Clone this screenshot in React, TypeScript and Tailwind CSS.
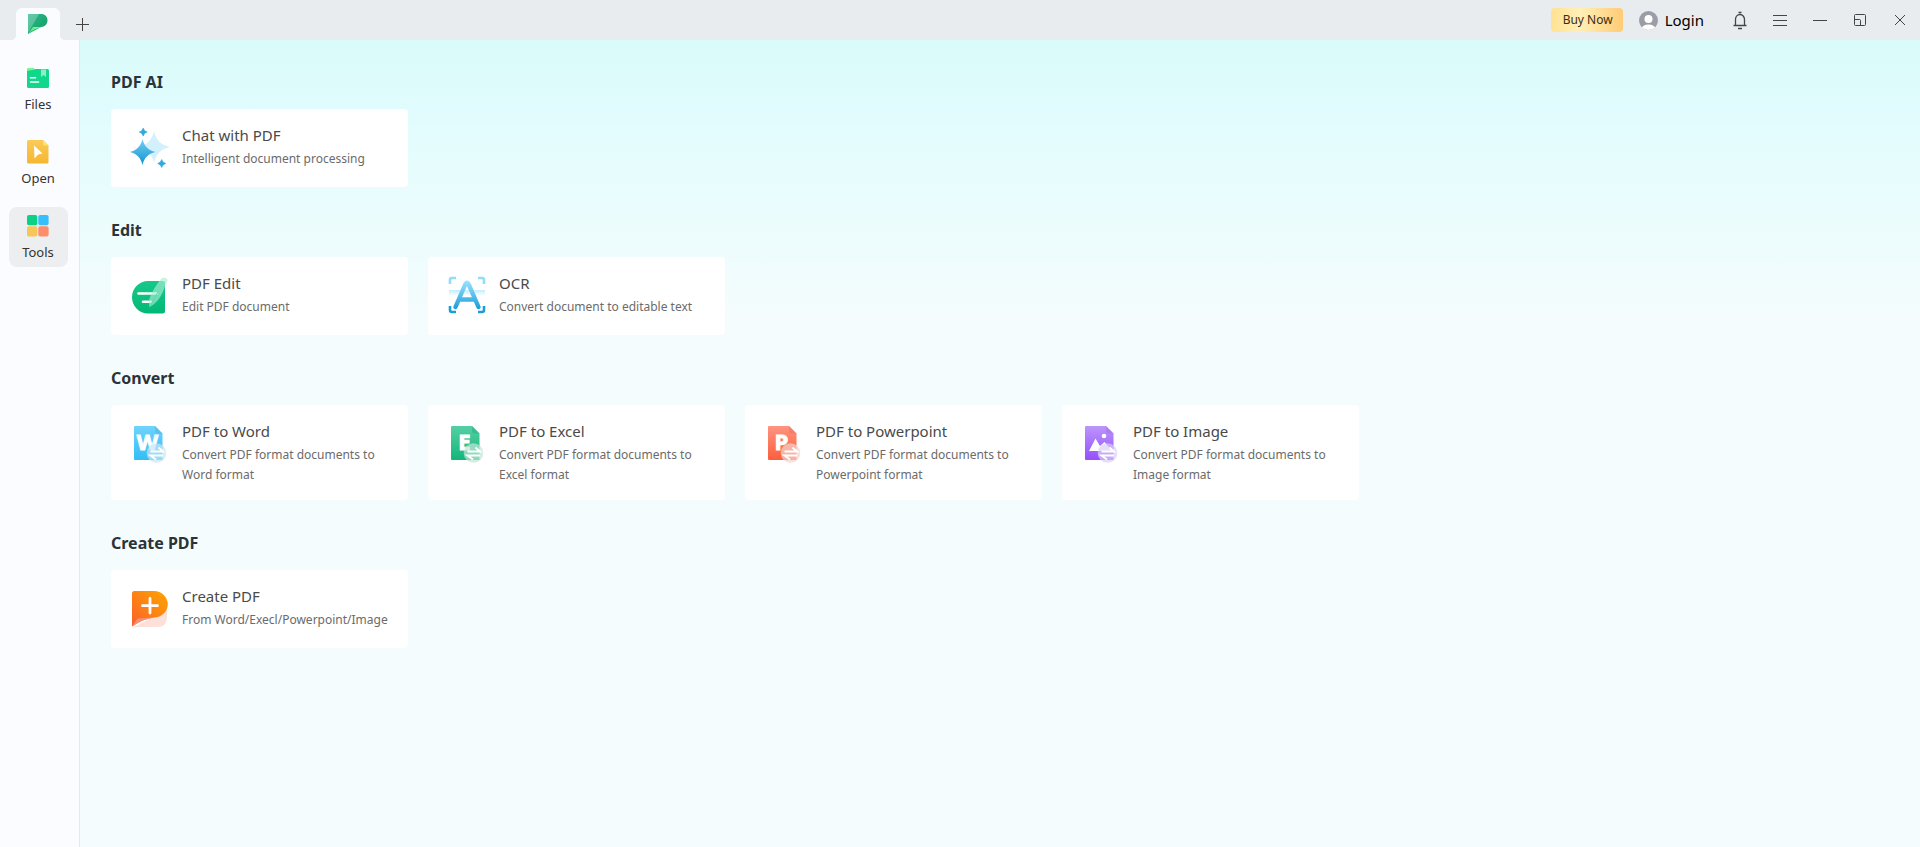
import type { ReactNode } from "react";

type Tool = {
  title: string;
  description: string;
  icon: ReactNode;
};

type Section = {
  name: string;
  tools: Tool[];
};

const Logo = () => (
  <svg width="20" height="20" viewBox="0 0 20 20">
    <defs>
      <linearGradient id="logo-top" x1="0" y1="0" x2="1" y2="1">
        <stop offset="0" stopColor="#2fb98a" />
        <stop offset="1" stopColor="#0b9d63" />
      </linearGradient>
      <linearGradient id="logo-tail" x1="0" y1="1" x2="1" y2="0">
        <stop offset="0" stopColor="#3fdc6f" />
        <stop offset="1" stopColor="#8dff9a" />
      </linearGradient>
    </defs>
    <path d="M0 20V0H13C17 0 19.500 2.700 19.500 6.300S17 13 13 13Z" fill="url(#logo-top)" />
    <path d="M0 0H11L0 19Z" fill="#fff" opacity="0.25" />
    <path d="M0 20L5 13H14C8.500 14 4 16.300 0 20Z" fill="url(#logo-tail)" />
  </svg>
);

const FilesIcon = () => (
  <svg width="22" height="22" viewBox="0 0 22 22">
    <path d="M0 2.500Q0 1 1.500 1H6.500L8.500 3.500V8H0Z" fill="#7df58c" />
    <rect y="2" width="22" height="19" rx="1.500" fill="#10d78c" />
    <path d="M0 4V2.500Q0 1 1.500 1H6.500L8 2.500Z" fill="#7df58c" />
    <path d="M14 2.500H19V10L16.500 8L14 10Z" fill="#8cf0c6" />
    <path d="M3.500 10.700H8.500M3.500 15H11.500" stroke="#fff" strokeWidth="1.600" strokeLinecap="round" />
  </svg>
);

const OpenIcon = () => (
  <svg width="22" height="24" viewBox="0 0 22 24">
    <defs>
      <linearGradient id="open-bg" x1="0" y1="0" x2="0" y2="1">
        <stop offset="0" stopColor="#fbcb57" />
        <stop offset="1" stopColor="#f5b731" />
      </linearGradient>
    </defs>
    <path d="M1.500 0H16L21.500 5.500V22Q21.500 23.500 20 23.500H1.500Q0 23.500 0 22V1.500Q0 0 1.500 0Z" fill="url(#open-bg)" />
    <path d="M16 0L21.500 5.500H17.500Q16 5.500 16 4Z" fill="#ffe45e" />
    <path d="M7 5.500L15.500 13.500L11 14.500L7.500 18.500Z" fill="#fff" />
  </svg>
);

const ToolsIcon = () => (
  <svg width="22" height="22" viewBox="0 0 22 22">
    <rect width="10.300" height="10.300" rx="1.800" fill="#0bd186" />
    <rect x="11.300" width="10.300" height="10.300" rx="1.800" fill="#35bffd" />
    <rect y="11.300" width="10.300" height="10.300" rx="1.800" fill="#f7c65a" />
    <rect x="11.300" y="11.300" width="10.300" height="10.300" rx="1.800" fill="#ff8c6b" />
  </svg>
);

const ChatIcon = () => (
  <svg width="40" height="42" viewBox="0 0 40 42">
    <defs>
      <linearGradient id="chat-star" x1="0" y1="0" x2="0" y2="1">
        <stop offset="0" stopColor="#6fd0f7" />
        <stop offset="1" stopColor="#1593cd" />
      </linearGradient>
    </defs>
    <path d="M24 4C26 13 31 18 40 20C31 22 26 27 24 36C22 27 17 22 8 20C17 18 22 13 24 4Z" fill="#d3f1fd" />
    <path d="M12.500 12C14.500 19.500 18 23 25.500 25C18 27 14.500 30.500 12.500 38C10.500 30.500 7 27 0 25C7 23 10.500 19.500 12.500 12Z" fill="url(#chat-star)" />
    <path d="M13.200 1Q14 4.200 17.200 5Q14 5.800 13.200 9Q12.400 5.800 9.200 5Q12.400 4.200 13.200 1Z" fill="#31a9dd" stroke="#31a9dd" strokeWidth="0.600" />
    <path d="M31.700 32.500Q32.500 35.700 35.700 36.500Q32.500 37.300 31.700 40.500Q30.900 37.300 27.700 36.500Q30.900 35.700 31.700 32.500Z" fill="#31a9dd" stroke="#31a9dd" strokeWidth="0.600" />
  </svg>
);

const EditIcon = () => (
  <svg width="40" height="40" viewBox="0 0 40 40">
    <defs>
      <linearGradient id="edit-bg" x1="0" y1="0" x2="0" y2="1">
        <stop offset="0" stopColor="#16c98a" />
        <stop offset="1" stopColor="#03b877" />
      </linearGradient>
    </defs>
    <path d="M18 5H33Q35 5 35 7V35Q35 37.500 32.500 37.500H18A16 16.250 0 0 1 18 5Z" fill="url(#edit-bg)" />
    <path d="M8.500 17.500H27M13 25.800H21" stroke="#fff" strokeWidth="2.600" strokeLinecap="round" />
    <path d="M32.500 2Q37.500 1 37.500 5L35 10C33 17 28 27 19.500 31Q17 24 24 13C27 8 29.500 4 32.500 2Z" fill="#a9ecd2" opacity="0.650" />
    <path d="M19.500 31L28 16" stroke="#5fd8ac" strokeWidth="1" />
  </svg>
);

const OcrIcon = () => (
  <svg width="40" height="40" viewBox="0 0 40 40">
    <defs>
      <linearGradient id="ocr-a" gradientUnits="userSpaceOnUse" x1="0" y1="5" x2="0" y2="34">
        <stop offset="0" stopColor="#9be2ff" />
        <stop offset="1" stopColor="#189bd6" />
      </linearGradient>
      <linearGradient id="ocr-band" x1="0" y1="0" x2="0" y2="1">
        <stop offset="0" stopColor="#c5edfd" />
        <stop offset="1" stopColor="#ffffff" />
      </linearGradient>
    </defs>
    <rect x="2" y="14" width="36" height="6" fill="url(#ocr-band)" />
    <path d="M3 8V4Q3 2 5 2H9M31 2H35Q37 2 37 4V8" fill="none" stroke="#8fdcfb" strokeWidth="2.600" />
    <path d="M3 30V34Q3 36 5 36H9M31 36H35Q37 36 37 34V30" fill="none" stroke="#1d9dd6" strokeWidth="2.600" />
    <path d="M8.500 31L18 9Q20 4.500 22 9L31.500 31M13 23.500H27.500" fill="none" stroke="url(#ocr-a)" strokeWidth="4.400" strokeLinecap="round" strokeLinejoin="round" />
  </svg>
);

type FileIconProps = {
  id: string;
  from: string;
  to: string;
  fold: string;
  badge: string;
  children: ReactNode;
};

const FileIcon = ({ id, from, to, fold, badge, children }: FileIconProps) => (
  <svg width="40" height="40" viewBox="0 0 40 40">
    <defs>
      <linearGradient id={id} x1="0" y1="0" x2="0" y2="1">
        <stop offset="0" stopColor={from} />
        <stop offset="1" stopColor={to} />
      </linearGradient>
    </defs>
    <path d="M5 2H25L32.500 9.500V36H5Q4 36 4 35V3Q4 2 5 2Z" fill={`url(#${id})`} />
    <path d="M25 2L32.500 9.500H27Q25 9.500 25 7.500Z" fill={fold} opacity="0.600" />
    {children}
    <circle cx="26.500" cy="29" r="9.800" fill={badge} opacity="0.700" />
    <path d="M20.500 27.500H33L28.500 23.500M33 31.500H20.500L26 35.500" fill="none" stroke="#fff" strokeWidth="2" />
  </svg>
);

const Letter = ({ children }: { children: string }) => (
  <text x="17.500" y="26" textAnchor="middle" fill="#fff" stroke="#fff" strokeWidth="1" className="font-['Open_Sans',sans-serif] text-[22px] font-bold">
    {children}
  </text>
);

const CreateIcon = () => (
  <svg width="40" height="40" viewBox="0 0 40 40">
    <defs>
      <linearGradient id="create-bg" x1="0" y1="1" x2="1" y2="0">
        <stop offset="0" stopColor="#fa5f2c" />
        <stop offset="0.600" stopColor="#fd8a10" />
        <stop offset="1" stopColor="#ffa400" />
      </linearGradient>
    </defs>
    <path d="M6 37L37 20V28Q37 38 27 38H4Z" fill="#fde0da" />
    <path d="M4.500 2H24A13.500 13 0 0 1 24 28.500C16 29.500 9 32.500 2 37.500V4.500Q2 2 4.500 2Z" fill="url(#create-bg)" />
    <path d="M2 37.500L7.500 29.500L24 28.500C16 29.500 9 32.500 2 37.500Z" fill="#f98e78" />
    <path d="M20 9.500V24M12.500 16.700H27.500" stroke="#fff" strokeWidth="2.800" strokeLinecap="round" />
  </svg>
);

const sections: Section[] = [
  {
    name: "PDF AI",
    tools: [
      { title: "Chat with PDF", description: "Intelligent document processing", icon: <ChatIcon /> },
    ],
  },
  {
    name: "Edit",
    tools: [
      { title: "PDF Edit", description: "Edit PDF document", icon: <EditIcon /> },
      { title: "OCR", description: "Convert document to editable text", icon: <OcrIcon /> },
    ],
  },
  {
    name: "Convert",
    tools: [
      {
        title: "PDF to Word",
        description: "Convert PDF format documents to Word format",
        icon: (
          <FileIcon id="word" from="#6fd3fb" to="#33bdf6" fold="#4fb9e6" badge="#c8e6f4">
            <Letter>W</Letter>
          </FileIcon>
        ),
      },
      {
        title: "PDF to Excel",
        description: "Convert PDF format documents to Excel format",
        icon: (
          <FileIcon id="excel" from="#55d0a4" to="#12b67b" fold="#2fb387" badge="#c3e6d9">
            <Letter>E</Letter>
          </FileIcon>
        ),
      },
      {
        title: "PDF to Powerpoint",
        description: "Convert PDF format documents to Powerpoint format",
        icon: (
          <FileIcon id="powerpoint" from="#ff9480" to="#fb5f3c" fold="#ee7763" badge="#f3d4ce">
            <Letter>P</Letter>
          </FileIcon>
        ),
      },
      {
        title: "PDF to Image",
        description: "Convert PDF format documents to Image format",
        icon: (
          <FileIcon id="image" from="#bd95fb" to="#9450fb" fold="#a377ea" badge="#dccff5">
            <path d="M8 27L14.500 14.500L19 22L23.500 18L31 27Z" fill="#fff" />
            <circle cx="23" cy="12" r="2.300" fill="#fff" />
          </FileIcon>
        ),
      },
    ],
  },
  {
    name: "Create PDF",
    tools: [
      { title: "Create PDF", description: "From Word/Execl/Powerpoint/Image", icon: <CreateIcon /> },
    ],
  },
];

const navItems = [
  { label: "Files", icon: <FilesIcon />, active: false },
  { label: "Open", icon: <OpenIcon />, active: false },
  { label: "Tools", icon: <ToolsIcon />, active: true },
];

const windowButtons = [
  {
    label: "Notifications",
    icon: <path d="M3.500 14.500V8.500A4.500 5 0 0 1 12.500 8.500V14.500M1.500 14.500H14.500M6.500 1.500H9.500M6 17.500H10" strokeWidth="1.300" />,
  },
  { label: "Menu", icon: <path d="M1 4.500H15M1 9.500H15M1 14.500H15" /> },
  { label: "Minimize", icon: <path d="M1 9.500H15" /> },
  {
    label: "Restore",
    icon: <path d="M3.500 3.500H12.500Q13.500 3.500 13.500 4.500V13.500Q13.500 14.500 12.500 14.500H3.500Q2.500 14.500 2.500 13.500V4.500Q2.500 3.500 3.500 3.500ZM2.500 8.500H7.500Q8.500 8.500 8.500 9.500V14.500" />,
  },
  { label: "Close", icon: <path d="M3 4L13 14M13 4L3 14" /> },
];

const TitleBar = () => (
  <header className="flex h-10 items-center bg-[#e9ecef]">
    <div className="flex items-center self-end pl-[11px]">
      <span className="size-[5px] self-end bg-[radial-gradient(circle_at_0_0,transparent_5px,#fafcff_5px)]" />
      <button aria-label="Home" className="flex h-8 w-11 items-center justify-center rounded-t-md bg-[#fafcff]">
        <Logo />
      </button>
      <span className="size-[5px] self-end bg-[radial-gradient(circle_at_100%_0,transparent_5px,#fafcff_5px)]" />
      <button aria-label="New tab" className="flex h-8 w-[34px] items-center justify-center">
        <svg width="13" height="13" viewBox="0 0 13 13" stroke="#444" fill="none">
          <path d="M6.500 0V13M0 6.500H13" />
        </svg>
      </button>
    </div>
    <div className="ml-auto flex items-center">
      <button className="h-6 rounded bg-linear-to-r from-[#ffe291] via-[#fff0b8] via-40% to-[#ffcb74] pr-[10px] pl-3 text-xs text-[#3d2c10]">
        Buy Now
      </button>
      <button className="ml-4 flex items-center gap-[7px] text-[15px] text-black">
        <svg width="19" height="19" viewBox="0 0 19 19">
          <defs>
            <clipPath id="avatar">
              <circle cx="9.500" cy="9.500" r="9.500" />
            </clipPath>
          </defs>
          <g clipPath="url(#avatar)">
            <rect width="19" height="19" fill="#9a9da6" />
            <circle cx="9.500" cy="8" r="4" fill="#fff" />
            <ellipse cx="9.500" cy="18" rx="7" ry="4.500" fill="#fff" />
          </g>
        </svg>
        Login
      </button>
      <div className="ml-4 flex">
        {windowButtons.map((item) => (
          <button key={item.label} aria-label={item.label} className="flex h-10 w-10 items-center justify-center text-[#444]">
            <svg width="16" height="19" viewBox="0 0 16 19" fill="none" stroke="currentColor">
              {item.icon}
            </svg>
          </button>
        ))}
      </div>
    </div>
  </header>
);

const Sidebar = () => (
  <nav className="flex w-20 shrink-0 flex-col gap-[14px] border-r border-[#e3eaee] bg-[#fafcff] pt-[19px] pl-[9px]">
    {navItems.map((item) => (
      <button
        key={item.label}
        className={`flex h-[60px] w-[59px] flex-col items-center rounded-lg pt-2 pr-px text-[13px] leading-5 text-[#333] ${
          item.active ? "bg-[#eceef0]" : ""
        }`}
      >
        <span className="mb-[5px] flex h-[22px] items-center">{item.icon}</span>
        {item.label}
      </button>
    ))}
  </nav>
);

const ToolCard = ({ title, description, icon }: Tool) => (
  <button className="flex min-h-[78px] w-[297px] items-start gap-3 rounded bg-white py-[15px] pr-2 pl-[19px] text-left">
    <span className="mt-1 flex size-10 shrink-0 items-center justify-center">{icon}</span>
    <span className="flex flex-col gap-[3px]">
      <span className="text-[15px] leading-[22px] text-[#4a4a4a]">{title}</span>
      <span className="text-xs leading-5 text-[#6b6b6b]">{description}</span>
    </span>
  </button>
);

const App = () => {
  return (
    <div className="flex min-h-screen flex-col font-['Noto_Sans','Open_Sans',sans-serif]">
      <TitleBar />
      <div className="flex flex-1">
        <Sidebar />
        <main className="flex-1 bg-[linear-gradient(to_bottom,#d9fbfa_0px,#e3fcfe_90px,#f5fcfd_280px)] pt-7 pl-[31px]">
          {sections.map((section) => (
            <section key={section.name} className="mb-[29px]">
              <h2 className="mb-3 text-base leading-[29px] font-bold text-[#2b3338]">{section.name}</h2>
              <div className="flex flex-wrap gap-5">
                {section.tools.map((tool) => (
                  <ToolCard key={tool.title} {...tool} />
                ))}
              </div>
            </section>
          ))}
        </main>
      </div>
    </div>
  );
};

export default App;
